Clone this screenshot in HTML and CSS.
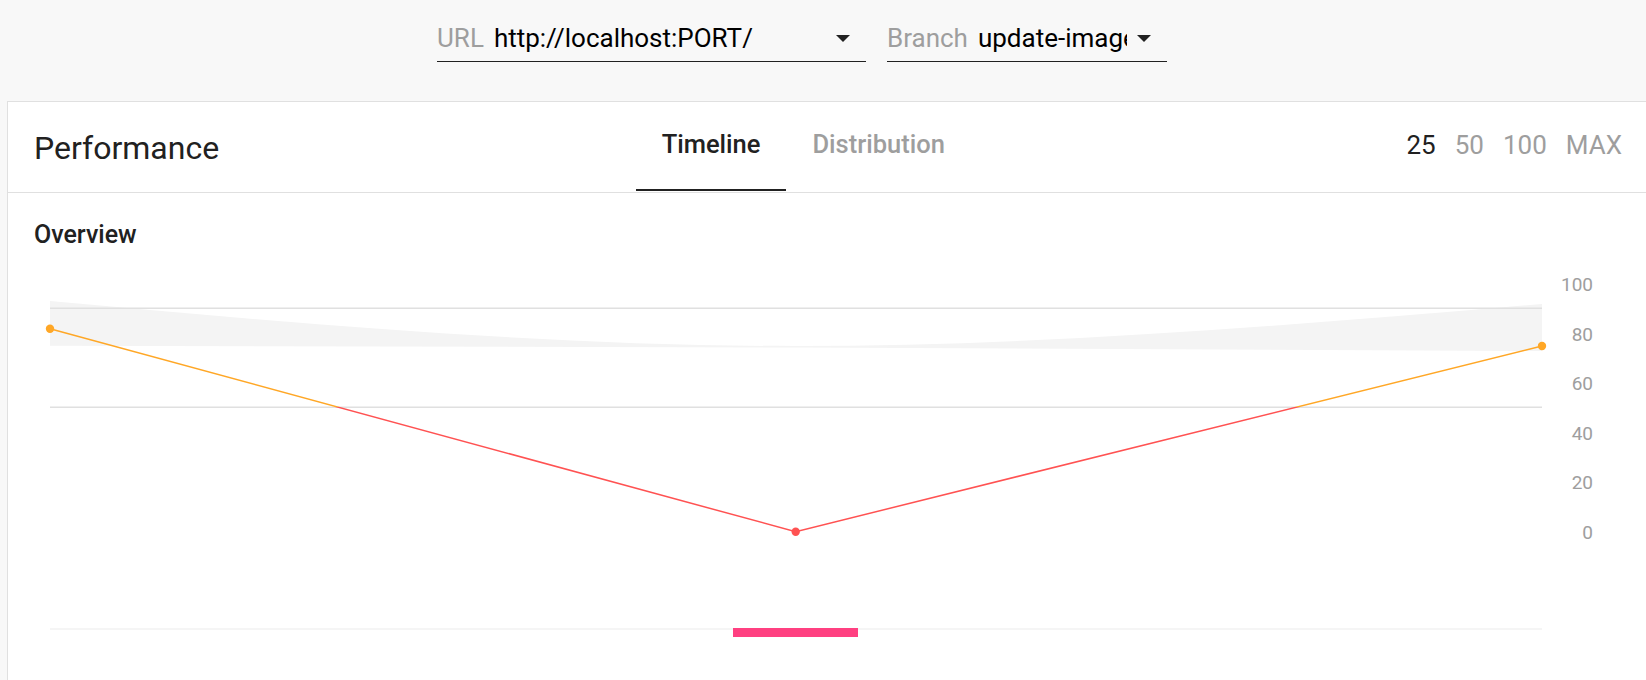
FILE: index.html
```html
<!DOCTYPE html>
<html>
<head>
<meta charset="utf-8">
<link rel="stylesheet" href="styles.css">
</head>
<body>
<div class="toolbar">
  <div class="field field-url">
    <span class="field-label">URL</span>
    <span class="field-value">http://localhost:PORT/</span>
    <span class="caret"></span>
  </div>
  <div class="field field-branch">
    <span class="field-label">Branch</span>
    <span class="field-value">update-images</span>
    <span class="caret"></span>
  </div>
</div>
<div class="card">
  <div class="card-header">
    <div class="title">Performance</div>
    <div class="tabs">
      <div class="tab active">Timeline</div>
      <div class="tab">Distribution</div>
    </div>
    <div class="ranges">
      <span class="range active">25</span>
      <span class="range">50</span>
      <span class="range">100</span>
      <span class="range">MAX</span>
    </div>
  </div>
  <div class="section">
    <div class="section-title">Overview</div>
    <svg class="chart" width="1638" height="420" viewBox="0 0 1638 420">
      <defs>
        <linearGradient id="lineGrad" gradientUnits="userSpaceOnUse" x1="0" y1="0" x2="0" y2="420">
          <stop offset="0" stop-color="#ffa726"/>
          <stop offset="0.3507" stop-color="#ffa726"/>
          <stop offset="0.3507" stop-color="#ff5252"/>
          <stop offset="1" stop-color="#ff5252"/>
        </linearGradient>
      </defs>
      <path class="band" d="M42,41 C290.7,63.5 539.3,86 787.7,86 C1036.3,86 1285.3,65 1534,44 L1534,91 L787.7,87.5 L42,85.7 Z"/>
      <line class="grid" x1="42" y1="48.3" x2="1534" y2="48.3"/>
      <line class="grid" x1="42" y1="147.3" x2="1534" y2="147.3"/>
      <line class="baseline" x1="42" y1="369" x2="1534" y2="369"/>
      <rect class="marker" x="725" y="368" width="125" height="9"/>
      <polyline class="series" points="42,68.7 787.7,271.7 1534,86"/>
      <circle cx="42" cy="68.7" r="4.2" fill="#ffa726"/>
      <circle cx="787.7" cy="271.7" r="4.2" fill="#ff5252"/>
      <circle cx="1534" cy="86" r="4.2" fill="#ffa726"/>
      <g class="axis">
        <text x="1585" y="31">100</text>
        <text x="1585" y="80.5">80</text>
        <text x="1585" y="130">60</text>
        <text x="1585" y="179.5">40</text>
        <text x="1585" y="229">20</text>
        <text x="1585" y="278.5">0</text>
      </g>
    </svg>
  </div>
</div>
</body>
</html>
```

FILE: styles.css
```css
* { box-sizing: border-box; }
html, body {
  margin: 0;
  padding: 0;
  background: #f8f8f8;
  font-family: Roboto, "Noto Sans", "Liberation Sans", sans-serif;
  overflow: hidden;
}
.toolbar {
  height: 101px;
  display: flex;
  justify-content: center;
  align-items: flex-start;
  padding-top: 23px;
  padding-right: 42px;
  gap: 21px;
}
.field {
  display: flex;
  align-items: center;
  gap: 10px;
  padding-bottom: 8px;
  padding-right: 16px;
  border-bottom: 1px solid #212121;
  font-size: 26px;
  line-height: 30px;
}
.field-url { width: 429px; }
.field-branch { width: 280px; }
.field-label { color: #9e9e9e; white-space: nowrap; }
.field-value {
  flex: 1;
  color: #000;
  white-space: nowrap;
  overflow: hidden;
}
.caret {
  flex: none;
  width: 0;
  height: 0;
  border-left: 7px solid transparent;
  border-right: 7px solid transparent;
  border-top: 7px solid #212121;
}
.card {
  margin-left: 7px;
  background: #fff;
  border-top: 1px solid #e0e0e0;
  border-left: 1px solid #e0e0e0;
  height: 579px;
}
.card-header {
  height: 91px;
  display: flex;
  justify-content: space-between;
  align-items: stretch;
  border-bottom: 1px solid #e0e0e0;
  padding-left: 26px;
  padding-right: 24px;
}
.title {
  display: flex;
  align-items: center;
  font-size: 32px;
  color: #212121;
  padding-top: 2px;
}
.tabs {
  display: flex;
  margin-right: 19px;
}
.tab {
  display: flex;
  align-items: center;
  padding: 0 26px 4px;
  font-size: 25.5px;
  font-weight: 500;
  color: #9e9e9e;
  border-bottom: 2px solid transparent;
  margin-bottom: 1px;
}
.tab.active {
  color: #212121;
  border-bottom-color: #212121;
}
.ranges {
  display: flex;
  align-items: center;
  gap: 19px;
  font-size: 26px;
  color: #9e9e9e;
  padding-bottom: 4px;
}
.range.active { color: #212121; }
.section { padding-top: 28px; }
.section-title {
  padding-left: 26px;
  font-size: 25px;
  line-height: 28px;
  font-weight: 500;
  color: #212121;
}
.chart {
  display: block;
  margin-top: 11px;
}
.band { fill: #f4f4f4; }
.grid { stroke: #e0e0e0; stroke-width: 1.5; }
.baseline { stroke: #f5f5f5; stroke-width: 2; }
.marker { fill: #ff4081; }
.series { fill: none; stroke: url(#lineGrad); stroke-width: 1.5; }
.axis text {
  font-family: Roboto, sans-serif;
  font-size: 19px;
  fill: #9e9e9e;
  text-anchor: end;
}
```
